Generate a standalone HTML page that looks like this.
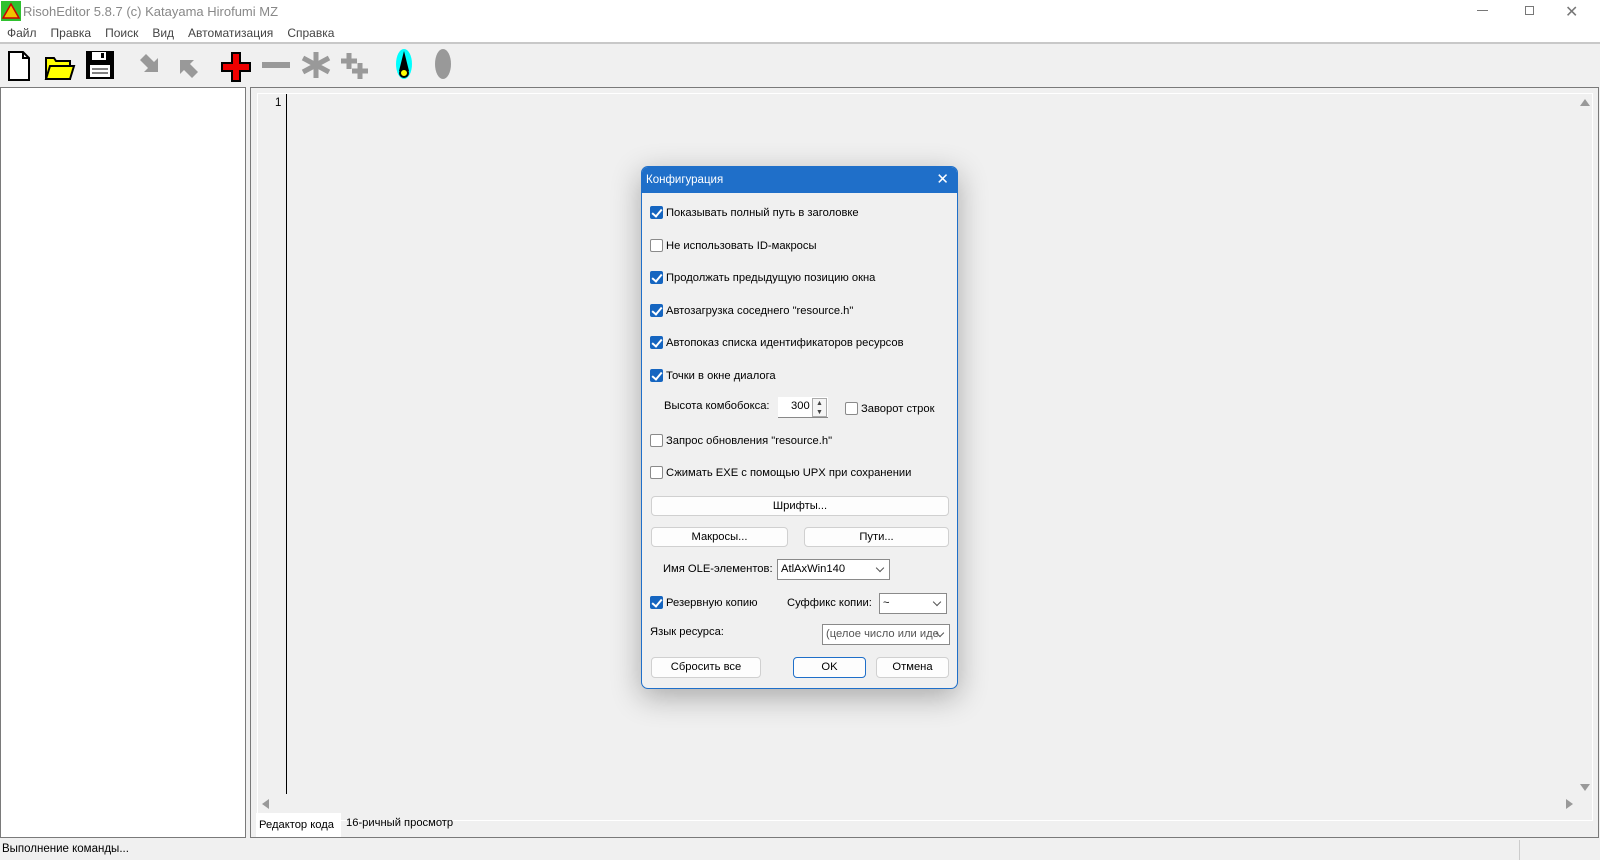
<!DOCTYPE html>
<html><head><meta charset="utf-8"><style>
*{box-sizing:border-box;margin:0;padding:0}
body{width:1600px;height:860px;background:#f0f0f0;font-family:"Liberation Sans","DejaVu Sans",sans-serif;font-size:12px;color:#000;position:relative;overflow:hidden}
.a{position:absolute}
.cb{position:absolute;width:13px;height:13px;border:1px solid #8a8a8a;background:#fff;border-radius:2px}
.cb.on{background:#1565c0;border-color:#1565c0}
.cb.on::after{content:"";position:absolute;left:3px;top:0px;width:4px;height:8px;border:solid #fff;border-width:0 2px 2px 0;transform:rotate(40deg)}
.t{position:absolute;font-size:11.2px;white-space:nowrap;line-height:14px}
.btn{position:absolute;background:#fdfdfd;border:1px solid #d0d0d0;border-radius:4px;text-align:center;font-size:11.2px;line-height:18px}
.cmb{position:absolute;background:#fff;border:1px solid #8a8a8a;font-size:11.2px;line-height:18px;padding-left:3px;white-space:nowrap;overflow:hidden}
.cmb::after{content:"";position:absolute;right:6px;top:5px;width:5px;height:5px;border:solid #555;border-width:0 1px 1px 0;transform:rotate(45deg)}
</style></head><body>
<div class="a" style="left:0;top:0;width:1600px;height:43px;background:#fff"></div>
<svg class="a" style="left:1px;top:1px" width="20" height="20"><rect width="20" height="20" fill="#2fc12f"/><polygon points="10,3 18,17 2,17" fill="#f2c200" stroke="#c00" stroke-width="1.5"/></svg>
<div class="a" style="left:23px;top:4px;font-size:13px;color:#888">RisohEditor 5.8.7 (c) Katayama Hirofumi MZ</div>
<div class="a" style="left:1477px;top:10px;width:11px;height:1px;background:#777"></div>
<div class="a" style="left:1525px;top:6px;width:9px;height:9px;border:1px solid #777"></div>
<div class="a" style="left:1565px;top:2px;font-size:16px;color:#777">✕</div>
<div class="a" style="left:7px;top:26px;font-size:12px;color:#444">
<span style="margin-right:14px">Файл</span><span style="margin-right:14px">Правка</span><span style="margin-right:14px">Поиск</span><span style="margin-right:14px">Вид</span><span style="margin-right:14px">Автоматизация</span><span>Справка</span></div>
<div class="a" style="left:0;top:42px;width:1600px;height:2px;background:#c8c8c8"></div>
<svg class="a" style="left:0;top:48px" width="470" height="34">
<path d="M9 4h14l6 6v22H9z" fill="#fff" stroke="#000" stroke-width="2"/><path d="M23 4v6h6" fill="none" stroke="#000" stroke-width="2"/>
<path d="M46 10h8l2 3h14v18H46z" fill="#ff0" stroke="#000" stroke-width="2"/><path d="M46 31l4-13h24l-4 13z" fill="#ff0" stroke="#000" stroke-width="2"/>
<rect x="86" y="3" width="28" height="28" fill="#000"/><rect x="92" y="4" width="14" height="8" fill="#fff"/><rect x="101" y="5" width="3" height="5" fill="#000"/><rect x="90" y="17" width="20" height="12" fill="#fff"/><path d="M92 21h16M92 25h16" stroke="#000"/>
<path d="M140 12l6-6 8 8 4-4v14h-14l4-4z" fill="#999"/>
<path d="M192 30l6-6-8-8 4-4h-14v14l4-4 8 8z" fill="#999"/>
<path d="M232 5h8v10h10v8h-10v10h-8v-10h-10v-8h10z" fill="#e00" stroke="#000" stroke-width="2"/>
<rect x="262" y="14" width="28" height="6" fill="#999"/>
<path d="M316 4v26M303 10l26 14M303 24l26-14" stroke="#999" stroke-width="5"/>
<path d="M349 5v16M341 13h16M360 15v16M352 23h16" stroke="#999" stroke-width="5"/>
<ellipse cx="404" cy="16" rx="8" ry="15" fill="#0ff"/><path d="M404 3l-5 20h10z" fill="#000"/><circle cx="404" cy="25" r="4" fill="#ff0" stroke="#000" stroke-width="2"/>
<ellipse cx="443" cy="16" rx="8" ry="15" fill="#999"/>
</svg>
<div class="a" style="left:0;top:87px;width:246px;height:751px;background:#fff;border:1px solid #7a7a7a"></div>
<div class="a" style="left:250px;top:87px;width:1349px;height:751px;border:1px solid #7a7a7a;background:#f0f0f0"></div>
<div class="a" style="left:257px;top:93px;width:1336px;height:728px;border:1px solid #fff"></div>
<div class="a" style="left:275px;top:97px;font-size:11.5px">1</div>
<div class="a" style="left:286px;top:94px;width:1px;height:700px;background:#000"></div>
<div class="a" style="left:1580px;top:99px;width:0;height:0;border:5px solid transparent;border-bottom:7px solid #999;border-top:0"></div>
<div class="a" style="left:1580px;top:784px;width:0;height:0;border:5px solid transparent;border-top:7px solid #999;border-bottom:0"></div>
<div class="a" style="left:262px;top:799px;width:0;height:0;border:5px solid transparent;border-right:7px solid #999;border-left:0"></div>
<div class="a" style="left:1566px;top:799px;width:0;height:0;border:5px solid transparent;border-left:7px solid #999;border-right:0"></div>
<div class="a" style="left:256px;top:813px;width:85px;height:24px;background:#fff"></div>
<div class="a" style="left:259px;top:819px;font-size:11.2px">Редактор кода</div>
<div class="a" style="left:346px;top:817px;font-size:11.2px">16-ричный просмотр</div>
<div class="a" style="left:2px;top:843px;font-size:11.5px">Выполнение команды...</div>
<div class="a" style="left:1519px;top:840px;width:1px;height:20px;background:#ccc"></div>
<div class="a" style="left:641px;top:166px;width:317px;height:523px;background:#f0f0f0;border:1px solid #1f6fc9;border-radius:7px;box-shadow:0 8px 30px rgba(0,0,0,.3);overflow:hidden">
<div style="height:26px;background:#1f6fc9;color:#fff;font-size:11.5px;line-height:26px;padding-left:4px">Конфигурация<span style="position:absolute;right:8px;top:0;font-size:15px">✕</span></div>
</div>
<div class="cb on" style="left:650px;top:206px"></div><div class="t" style="left:666px;top:206px">Показывать полный путь в заголовке</div>
<div class="cb" style="left:650px;top:239px"></div><div class="t" style="left:666px;top:239px">Не использовать ID-макросы</div>
<div class="cb on" style="left:650px;top:271px"></div><div class="t" style="left:666px;top:271px">Продолжать предыдущую позицию окна</div>
<div class="cb on" style="left:650px;top:304px"></div><div class="t" style="left:666px;top:304px">Автозагрузка соседнего "resource.h"</div>
<div class="cb on" style="left:650px;top:336px"></div><div class="t" style="left:666px;top:336px">Автопоказ списка идентификаторов ресурсов</div>
<div class="cb on" style="left:650px;top:369px"></div><div class="t" style="left:666px;top:369px">Точки в окне диалога</div>
<div class="t" style="left:664px;top:399px">Высота комбобокса:</div>
<div class="a" style="left:778px;top:397px;width:50px;height:21px;background:#fff;border-bottom:1px solid #888"></div>
<div class="t" style="left:791px;top:399px">300</div>
<div class="a" style="left:812px;top:398px;width:15px;height:19px;border:1px solid #aaa;background:#f5f5f5;font-size:7px;line-height:9px;text-align:center;color:#444">▲<br>▼</div>
<div class="cb" style="left:845px;top:402px"></div><div class="t" style="left:861px;top:402px">Заворот строк</div>
<div class="cb" style="left:650px;top:434px"></div><div class="t" style="left:666px;top:434px">Запрос обновления "resource.h"</div>
<div class="cb" style="left:650px;top:466px"></div><div class="t" style="left:666px;top:466px">Сжимать EXE с помощью UPX при сохранении</div>
<div class="btn" style="left:651px;top:496px;width:298px;height:20px">Шрифты...</div>
<div class="btn" style="left:651px;top:527px;width:137px;height:20px">Макросы...</div>
<div class="btn" style="left:804px;top:527px;width:145px;height:20px">Пути...</div>
<div class="t" style="left:663px;top:562px">Имя OLE-элементов:</div>
<div class="cmb" style="left:777px;top:559px;width:113px;height:21px">AtlAxWin140</div>
<div class="cb on" style="left:650px;top:596px"></div><div class="t" style="left:666px;top:596px">Резервную копию</div>
<div class="t" style="left:787px;top:596px">Суффикс копии:</div>
<div class="cmb" style="left:879px;top:593px;width:68px;height:21px">~</div>
<div class="t" style="left:650px;top:625px">Язык ресурса:</div>
<div class="cmb" style="left:822px;top:624px;width:128px;height:21px;color:#555;padding-right:18px">(целое число или иде</div>
<div class="btn" style="left:651px;top:657px;width:110px;height:21px">Сбросить все</div>
<div class="btn" style="left:793px;top:657px;width:73px;height:21px;border:1px solid #1f6fc9">OK</div>
<div class="btn" style="left:876px;top:657px;width:73px;height:21px">Отмена</div>
</body></html>
